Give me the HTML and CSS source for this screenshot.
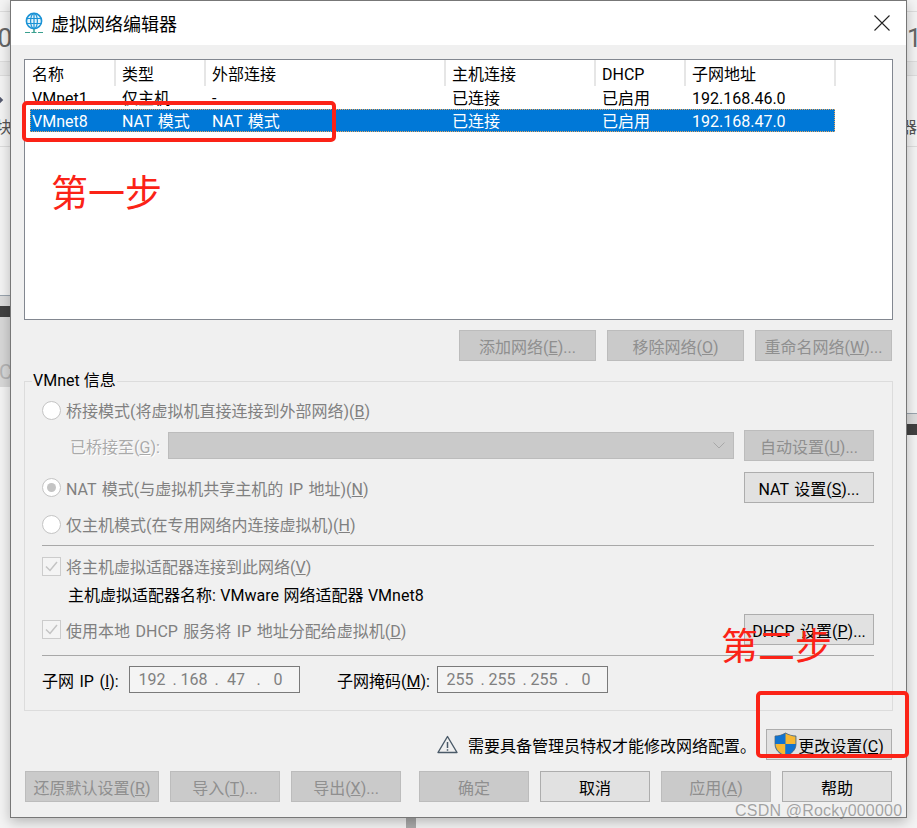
FILE: index.html
```html
<!DOCTYPE html>
<html lang="zh-CN">
<head>
  <meta charset="UTF-8">
  <title>虚拟网络编辑器</title>
  <link rel="stylesheet" href="styles.css">
</head>
<body>
  <!-- what shows of the app behind the dialog -->
  <div class="bg-edge bg-left">
    <div class="bg-cell bg-cell-b">0</div>
    <div class="bg-cell bg-cell-h"></div>
    <div class="bg-cell bg-cell-c"><span class="bg-dot"></span>块</div>
    <div class="bg-gap bg-gap-left"></div>
    <div class="bg-light"></div>
    <div class="bg-dark"></div>
    <div class="bg-gray">C</div>
  </div>
  <div class="bg-edge bg-right">
    <div class="bg-cell bg-cell-b">1</div>
    <div class="bg-cell bg-cell-h"></div>
    <div class="bg-cell bg-cell-c">器</div>
    <div class="bg-gap bg-gap-right"></div>
    <div class="bg-light"></div>
    <div class="bg-dark"></div>
  </div>
  <div class="bg-stub"></div>

  <div class="window">
    <div class="titlebar">
      <svg class="title-icon" width="20" height="22" viewBox="0 0 20 22">
        <circle cx="10" cy="9" r="7.6" fill="#e3f3fb" stroke="#1b93d6" stroke-width="1.6"/>
        <ellipse cx="10" cy="9" rx="3.4" ry="7.6" fill="none" stroke="#1b93d6" stroke-width="1.2"/>
        <path d="M2.5 6.5h15M2.5 11.5h15M10 1.500v15" stroke="#1b93d6" stroke-width="1.2" fill="none"/>
        <path d="M10 17v3" stroke="#3aa08f" stroke-width="1.500"/>
        <path d="M1 20.500h5M7.500 20.500h5M14 20.500h5" stroke="#3aa08f" stroke-width="1.200"/>
      </svg>
      <span class="title-text">虚拟网络编辑器</span>
      <svg class="close-icon" width="16" height="16" viewBox="0 0 16 16">
        <path d="M0.500 0.500l15 15M15.500 0.500l-15 15" stroke="#222" stroke-width="1.100" fill="none"/>
      </svg>
    </div>

    <div class="content">
      <div class="net-list">
        <div class="net-row net-head">
          <span class="c1">名称</span><span class="c2">类型</span><span class="c3">外部连接</span><span class="c4">主机连接</span><span class="c5">DHCP</span><span class="c6">子网地址</span>
        </div>
        <div class="net-row">
          <span class="c1">VMnet1</span><span class="c2">仅主机</span><span class="c3">-</span><span class="c4">已连接</span><span class="c5">已启用</span><span class="c6">192.168.46.0</span>
        </div>
        <div class="net-row net-selected">
          <span class="c1">VMnet8</span><span class="c2">NAT 模式</span><span class="c3">NAT 模式</span><span class="c4">已连接</span><span class="c5">已启用</span><span class="c6">192.168.47.0</span>
        </div>
      </div>

      <div class="list-actions">
        <button class="btn btn-off btn-137">添加网络(<u>E</u>)...</button>
        <button class="btn btn-off btn-137">移除网络(<u>O</u>)</button>
        <button class="btn btn-off btn-137">重命名网络(<u>W</u>)...</button>
      </div>

      <fieldset class="info-group">
        <legend>VMnet 信息</legend>

        <div class="opt-row row-bridge">
          <span class="radio"></span>
          <span class="off-text">桥接模式(将虚拟机直接连接到外部网络)(<u>B</u>)</span>
        </div>
        <div class="opt-row row-bridge-to">
          <span class="off-text bridge-label">已桥接至(<u>G</u>):</span>
          <div class="combo">
            <svg width="12" height="7" viewBox="0 0 12 7"><path d="M0.500 0.500l5.500 5.500 5.500-5.500" fill="none" stroke="#a8a8a8"/></svg>
          </div>
          <button class="btn btn-off btn-130">自动设置(<u>U</u>)...</button>
        </div>
        <div class="opt-row row-nat">
          <span class="radio radio-on"></span>
          <span class="off-text">NAT 模式(与虚拟机共享主机的 IP 地址)(<u>N</u>)</span>
          <button class="btn btn-130 push-right">NAT 设置(<u>S</u>)...</button>
        </div>
        <div class="opt-row row-host">
          <span class="radio"></span>
          <span class="off-text">仅主机模式(在专用网络内连接虚拟机)(<u>H</u>)</span>
        </div>

        <hr class="sep sep-first">

        <div class="opt-row row-adapter">
          <span class="check"><svg width="13" height="11" viewBox="0 0 13 11"><path d="M1 5.500l4 4 7-8.500" fill="none" stroke="#c4c4c4" stroke-width="1.500"/></svg></span>
          <span class="off-text">将主机虚拟适配器连接到此网络(<u>V</u>)</span>
        </div>
        <div class="adapter-name">主机虚拟适配器名称: VMware 网络适配器 VMnet8</div>
        <div class="opt-row row-dhcp">
          <span class="check"><svg width="13" height="11" viewBox="0 0 13 11"><path d="M1 5.500l4 4 7-8.500" fill="none" stroke="#c4c4c4" stroke-width="1.500"/></svg></span>
          <span class="off-text">使用本地 DHCP 服务将 IP 地址分配给虚拟机(<u>D</u>)</span>
          <button class="btn btn-130 push-right">DHCP 设置(<u>P</u>)...</button>
        </div>

        <hr class="sep sep-second">

        <div class="subnet-row">
          <span class="subnet-label">子网 IP (<u>I</u>):</span>
          <div class="ip-box"><span>192</span><i>.</i><span>168</span><i>.</i><span>47</span><i>.</i><span>0</span></div>
          <span class="subnet-label mask-label">子网掩码(<u>M</u>):</span>
          <div class="ip-box"><span>255</span><i>.</i><span>255</span><i>.</i><span>255</span><i>.</i><span>0</span></div>
        </div>
      </fieldset>

      <div class="admin-row">
        <svg class="warn-icon" width="21" height="19" viewBox="0 0 21 19">
          <path d="M10.500 1.500L20 17.500H1z" fill="none" stroke="#4a5a68" stroke-width="1.400" stroke-linejoin="round"/>
          <path d="M10.500 7v6M10.500 14.200v1.600" stroke="#4a5a68" stroke-width="1.500"/>
        </svg>
        <span class="admin-text">需要具备管理员特权才能修改网络配置。</span>
        <button class="btn btn-admin">
          <svg class="shield" width="23" height="25" viewBox="0 0 23 25">
            <path d="M11.500 1C8 3 5 4 1 4v8c0 6 4.500 10 10.500 12C17.500 22 22 18 22 12V4c-4 0-7-1-10.500-3z" fill="#0f6fc6" stroke="#5b6770" stroke-width="0.800"/>
            <path d="M11.500 1.500C8 3.300 5 4.300 1.500 4.400V12h10z" fill="#1173cf"/>
            <path d="M11.500 1.500C15 3.300 18 4.300 21.500 4.400V12h-10z" fill="#f7b731"/>
            <path d="M1.500 12h10v11.400C6 21.500 1.800 17.800 1.500 12z" fill="#f7b731"/>
            <path d="M21.500 12h-10v11.400c5.500-1.900 9.700-5.600 10-11.400z" fill="#1173cf"/>
          </svg>
          <span>更改设置(<u>C</u>)</span>
        </button>
      </div>

      <div class="footer-row">
        <button class="btn btn-off btn-restore">还原默认设置(<u>R</u>)</button>
        <button class="btn btn-off btn-110">导入(<u>T</u>)...</button>
        <button class="btn btn-off btn-110">导出(<u>X</u>)...</button>
        <button class="btn btn-off btn-110 gap-ok">确定</button>
        <button class="btn btn-110">取消</button>
        <button class="btn btn-off btn-110">应用(<u>A</u>)</button>
        <button class="btn btn-110">帮助</button>
      </div>
    </div>
  </div>

  <!-- annotations drawn over the screenshot -->
  <div class="mark mark-one"></div>
  <div class="mark mark-two"></div>
  <div class="note note-one">第一步</div>
  <div class="note note-two">第二步</div>
  <div class="watermark">CSDN @Rocky000000</div>
</body>
</html>
```

FILE: styles.css
```css
html, body {
  margin: 0;
  padding: 0;
}
body {
  width: 917px;
  height: 828px;
  position: relative;
  overflow: hidden;
  background: #f4f4f4;
  font-family: Roboto, "Noto Sans CJK SC", sans-serif;
  font-size: 16px;
  word-spacing: 1.5px;
  color: #000;
}
button {
  font-family: inherit;
  font-size: 16px;
  word-spacing: inherit;
}
u {
  text-underline-offset: 1px;
}

/* background app */
.bg-edge {
  position: absolute;
  top: 11px;
  width: 12px;
  color: #666;
  border-top: 1px solid #ddd;
}
.bg-left { left: 0; }
.bg-right { right: 0; }
.bg-cell {
  border-bottom: 1px solid #ddd;
  overflow: hidden;
  white-space: nowrap;
  position: relative;
}
.bg-cell-b { height: 49px; font-size: 26px; line-height: 52px; }
.bg-cell-h { height: 13px; background: #ebebeb; }
.bg-cell-c { height: 70px; font-size: 16px; line-height: 104px; color: #555; }
.bg-left .bg-cell-b, .bg-left .bg-cell-c { direction: rtl; }
.bg-right .bg-cell-b { text-indent: 2px; }
.bg-right .bg-cell-c { text-indent: -4px; }
.bg-dot {
  position: absolute;
  left: -4px;
  top: 21px;
  width: 6px;
  height: 6px;
  background: #555a70;
  transform: rotate(45deg);
}
.bg-gap-left { height: 148px; border-bottom: 1px solid #9aa4ae; }
.bg-gap-right { height: 266px; border-bottom: 1px solid #9aa4ae; }
.bg-light { height: 10px; background: #dcdcdc; }
.bg-dark { height: 11px; background: #414141; }
.bg-gray { height: 70px; background: #d8d8d8; color: #b4b4b4; font-size: 20px; line-height: 110px; direction: rtl; overflow: hidden; }
.bg-stub {
  position: absolute;
  left: 406px;
  top: 810px;
  width: 10px;
  height: 18px;
  background: #aaa;
}

/* dialog */
.window {
  position: absolute;
  left: 10px;
  top: 0;
  width: 897px;
  height: 818px;
  box-sizing: border-box;
  border: 1px solid #777;
  background: #f0f0f0;
  box-shadow: 0 4px 12px rgba(0,0,0,0.25);
  display: flex;
  flex-direction: column;
}
.titlebar {
  height: 44px;
  background: #fff;
  display: flex;
  align-items: center;
  padding: 0 16px 0 13px;
  flex-shrink: 0;
}
.title-icon {
  margin-right: 7px;
}
.title-text {
  font-size: 18px;
  flex: 1;
}
.content {
  padding: 14px 13px 0 13px;
}

/* list of networks */
.net-list {
  height: 261px;
  box-sizing: border-box;
  border: 1px solid #828790;
  background: #fff;
}
.net-row {
  display: flex;
  width: 805px;
  margin-left: 5px;
  height: 23px;
  line-height: 25px;
  white-space: nowrap;
  overflow: hidden;
}
.net-row span {
  box-sizing: border-box;
  padding-left: 2px;
  flex-shrink: 0;
}
.c1, .c2, .c5 { width: 90px; }
.c3 { width: 240px; }
.c4 { width: 150px; }
.c6 { width: 145px; }
.net-head {
  height: 26px;
  line-height: 29px;
  width: 811px;
  margin-left: 0;
}
.net-head span {
  border-right: 2px solid #e6e6e6;
  height: 26px;
  padding-left: 6px;
}
.net-head .c1 { width: 91px; padding-left: 7px; }
.net-head .c6 { width: 150px; }
.net-selected {
  background: #0078d7;
  color: #fff;
  outline: 1px dotted #e8a860;
  outline-offset: -1px;
}

/* buttons */
.btn {
  height: 31px;
  box-sizing: border-box;
  border: 1px solid #adadad;
  background: #e1e1e1;
  color: #000;
  padding: 0;
  border-radius: 0;
  white-space: nowrap;
}
.btn-off {
  background: #cacaca;
  border-color: #bcbcbc;
  color: #8f8f8f;
}
.btn-137 { width: 137px; }
.btn-130 { width: 130px; }
.btn-110 { width: 110px; }
.list-actions {
  display: flex;
  justify-content: flex-end;
  gap: 11px;
  margin-top: 10px;
  padding-right: 1px;
}

/* VMnet info group */
.info-group {
  margin: 10px 0 0 0;
  padding: 0 18px 0 17px;
  height: 340px;
  box-sizing: border-box;
  border: 1px solid #dcdcdc;
  position: relative;
}
.info-group legend {
  padding: 0 1px;
  margin-left: -10px;
  line-height: 20px;
  font-size: 16px;
  word-spacing: 0;
}
.opt-row {
  display: flex;
  align-items: center;
}
.off-text {
  color: #808080;
  white-space: nowrap;
}
.push-right {
  margin-left: auto;
}
.radio {
  width: 19px;
  height: 19px;
  box-sizing: border-box;
  border: 1px solid #c4c4c4;
  border-radius: 50%;
  background: #fff;
  margin-right: 5px;
  flex-shrink: 0;
  display: flex;
  align-items: center;
  justify-content: center;
}
.radio-on::after {
  content: "";
  width: 9px;
  height: 9px;
  border-radius: 50%;
  background: #c4c4c4;
}
.check {
  width: 19px;
  height: 19px;
  box-sizing: border-box;
  border: 1px solid #cccccc;
  background: #f4f4f4;
  margin-right: 5px;
  flex-shrink: 0;
  display: flex;
  align-items: center;
  justify-content: center;
}
.row-bridge { height: 20px; margin-top: 9px; }
.row-bridge-to { margin-top: 10px; height: 31px; }
.bridge-label { margin-left: 28px; width: 98px; color: #aaa; text-shadow: 1px 1px 0 #fff; }
.combo {
  flex: 1;
  height: 27px;
  box-sizing: border-box;
  border: 1px solid #bcbcbc;
  background: #cacaca;
  margin-right: 10px;
  display: flex;
  align-items: center;
  justify-content: flex-end;
  padding-right: 8px;
}
.row-nat { margin-top: 11px; height: 31px; }
.row-host { margin-top: 11px; height: 20px; }
.sep {
  border: 0;
  height: 1px;
  background: #a8a8a8;
  margin: 0;
}
.sep-first { margin-top: 11px; }
.row-adapter { margin-top: 10px; height: 20px; }
.adapter-name {
  margin: 10px 0 0 26px;
  line-height: 20px;
  height: 20px;
  white-space: nowrap;
  word-spacing: 0.5px;
}
.row-dhcp { margin-top: 8px; height: 31px; }
.sep-second { margin-top: 10px; }
.subnet-row {
  display: flex;
  align-items: center;
  margin-top: 10px;
}
.subnet-label { white-space: nowrap; width: 87px; flex-shrink: 0; }
.mask-label { width: 100px; margin-left: 37px; }
.ip-box {
  width: 171px;
  height: 27px;
  box-sizing: border-box;
  border: 1px solid #7a7a7a;
  background: #f4f4f4;
  color: #808080;
  display: flex;
  align-items: center;
  padding-left: 7px;
}
.ip-box span { width: 30px; text-align: center; }
.ip-box i { font-style: normal; width: 9px; padding-left: 3px; text-align: center; }

/* bottom */
.admin-row {
  display: flex;
  align-items: center;
  justify-content: flex-end;
  margin-top: 18px;
  height: 31px;
  padding-right: 1px;
}
.warn-icon { margin-right: 10px; }
.admin-text { margin-right: 10px; white-space: nowrap; }
.btn-admin {
  width: 126px;
  display: flex;
  align-items: center;
  justify-content: center;
  gap: 1px;
}
.footer-row {
  display: flex;
  gap: 11px;
  margin-top: 11px;
  padding-left: 1px;
}
.btn-restore { width: 134px; }
.gap-ok { margin-left: 7px; }

/* annotations */
.mark {
  position: absolute;
  box-sizing: border-box;
  border: 4px solid #fb2317;
  border-radius: 5px;
}
.mark-one { left: 22px; top: 101px; width: 314px; height: 41px; }
.mark-two { left: 756px; top: 691px; width: 153px; height: 67px; }
.note {
  position: absolute;
  color: #fb2317;
  font-size: 37px;
  line-height: 40px;
  font-family: "Noto Sans CJK SC", sans-serif;
}
.note-one { left: 51px; top: 171px; }
.note-two { left: 721px; top: 624px; }
.watermark {
  position: absolute;
  left: 735px;
  top: 801px;
  font-size: 16px;
  letter-spacing: 0.2px;
  word-spacing: 0;
  line-height: 19px;
  color: rgba(110,110,110,0.6);
  font-family: "Liberation Sans", sans-serif;
}
```
